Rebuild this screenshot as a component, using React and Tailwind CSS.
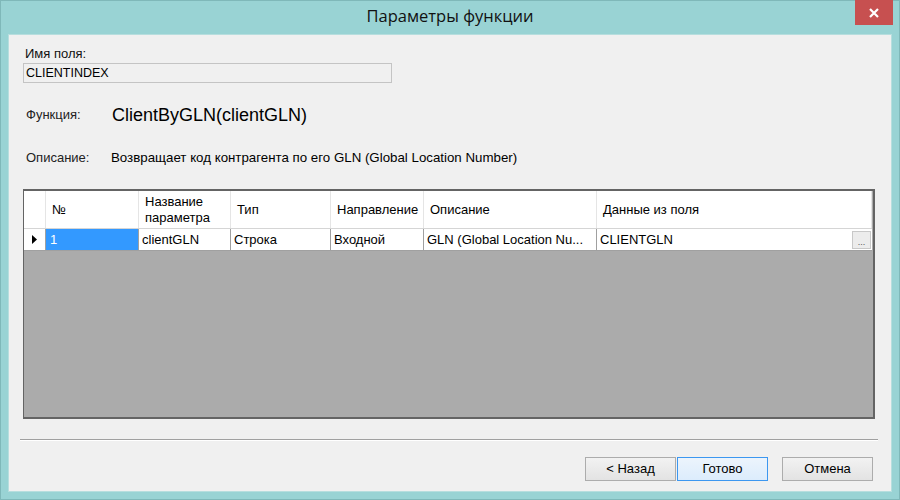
import React from "react";

const cols = [
  { key: "num", title: "№", w: "w-[93px]" },
  { key: "name", title: "Название параметра", w: "w-[92px]" },
  { key: "type", title: "Тип", w: "w-[100px]" },
  { key: "dir", title: "Направление", w: "w-[93px]" },
  { key: "desc", title: "Описание", w: "w-[173px]" },
  { key: "field", title: "Данные из поля", w: "w-[275px]" },
];

const row = {
  num: "1",
  name: "clientGLN",
  type: "Строка",
  dir: "Входной",
  desc: "GLN (Global Location Nu...",
  field: "CLIENTGLN",
};

function WinButton({ children, focused }) {
  return (
    <button
      className={
        "h-[24px] w-[91px] text-[13px] text-black border bg-gradient-to-b " +
        (focused
          ? "border-[#3c97f0] from-[#ecf4fc] to-[#dcecfc]"
          : "border-[#acacac] from-[#f2f2f2] to-[#e3e3e3]")
      }
    >
      {children}
    </button>
  );
}

function ParamsGrid() {
  return (
    <div className="h-[230px] bg-[#ababab] border-t-2 border-l border-r-2 border-b-2 border-[#646464] flex flex-col">
      {/* header */}
      <div className="flex h-[38px] bg-white border-b border-[#d5d5d5] w-[848px]">
        <div className="w-[22px] border-r border-[#e5e5e5]" />
        {cols.map((c) => (
          <div
            key={c.key}
            className={`${c.w} border-r border-[#e5e5e5] flex items-center px-[6px] leading-[16px]`}
          >
            {c.key === "name" ? (
              <span>
                Название
                <br />
                параметра
              </span>
            ) : (
              <span>{c.title}</span>
            )}
          </div>
        ))}
      </div>
      {/* data row */}
      <div className="flex h-[22px] bg-white w-[848px] border-b border-[#a0a0a0]">
        <div className="w-[22px] border-r border-[#a0a0a0] flex items-center justify-center">
          <svg width="5" height="9" viewBox="0 0 5 9">
            <path d="M0 0 L5 4.5 L0 9 Z" fill="#000" />
          </svg>
        </div>
        {cols.map((c) => (
          <div
            key={c.key}
            className={`${c.w} border-r border-[#a0a0a0] flex items-center whitespace-nowrap overflow-hidden pt-[1px] ${
              c.key === "num" ? "bg-[#3399ff] text-white pl-[4px]" : "pl-[3px]"
            } ${c.key === "field" ? "justify-between pr-[1px] border-r-0" : ""}`}
          >
            <span>{row[c.key]}</span>
            {c.key === "field" && (
              <span className="w-[19px] h-[18px] border border-[#c8c8c8] bg-[#ececec] flex items-end justify-center text-[9px] leading-[12px] text-[#555]">
                ...
              </span>
            )}
          </div>
        ))}
      </div>
    </div>
  );
}

export default function App() {
  return (
    <div
      className="w-[900px] h-[500px] bg-[#99d3d4] border border-[#7fb8b9] flex flex-col text-[13px] text-black"
      style={{ fontFamily: '"Liberation Sans", Arial, sans-serif' }}
    >
      {/* title bar */}
      <div className="h-[33px] flex relative items-center justify-center">
        <span
          className="text-[16.5px] text-[#111] -mt-[2px]"
          style={{ fontFamily: '"Open Sans", "Liberation Sans", sans-serif' }}
        >
          Параметры функции
        </span>
        <div className="absolute right-[6px] top-[-1px] w-[38px] h-[25px] bg-[#c75050] flex items-center justify-center">
          <svg width="10" height="10" viewBox="0 0 10 10">
            <path d="M1 1 L9 9 M9 1 L1 9" stroke="#fff" strokeWidth="2.2" />
          </svg>
        </div>
      </div>

      {/* client area */}
      <div className="mx-[7px] h-[458px] bg-[#f0f0f0] border border-[#b7dede] flex flex-col px-[14px]">
        <div className="mt-[11px] pl-[2px] leading-[15px] text-[#111]">Имя поля:</div>
        <div className="mt-[2px] w-[369px] h-[20px] border border-[#c4c4c4] bg-[#f0f0f0] flex items-center pl-[2px] text-[12.5px]">
          CLIENTINDEX
        </div>

        <div className="flex items-center mt-[21px] h-[22px]">
          <span className="w-[89px] pl-[3px] text-[#222]">Функция:</span>
          <span className="text-[18px] leading-[22px]">ClientByGLN(clientGLN)</span>
        </div>

        <div className="flex items-center mt-[24px] h-[16px]">
          <span className="w-[88px] pl-[3px] text-[#222]">Описание:</span>
          <span className="text-[13.3px]">Возвращает код контрагента по его GLN (Global Location Number)</span>
        </div>

        <div className="mt-[23px] w-[852px]">
          <ParamsGrid />
        </div>

        <div className="mt-[20px] -ml-[3px] w-[858px] border-t border-[#a0a0a0] border-b border-b-white" />

        <div className="flex justify-end mt-[16px] pr-[4px]">
          <WinButton>&lt; Назад</WinButton>
          <div className="w-[1px]" />
          <WinButton focused>Готово</WinButton>
          <div className="w-[14px]" />
          <WinButton>Отмена</WinButton>
        </div>
      </div>
    </div>
  );
}
